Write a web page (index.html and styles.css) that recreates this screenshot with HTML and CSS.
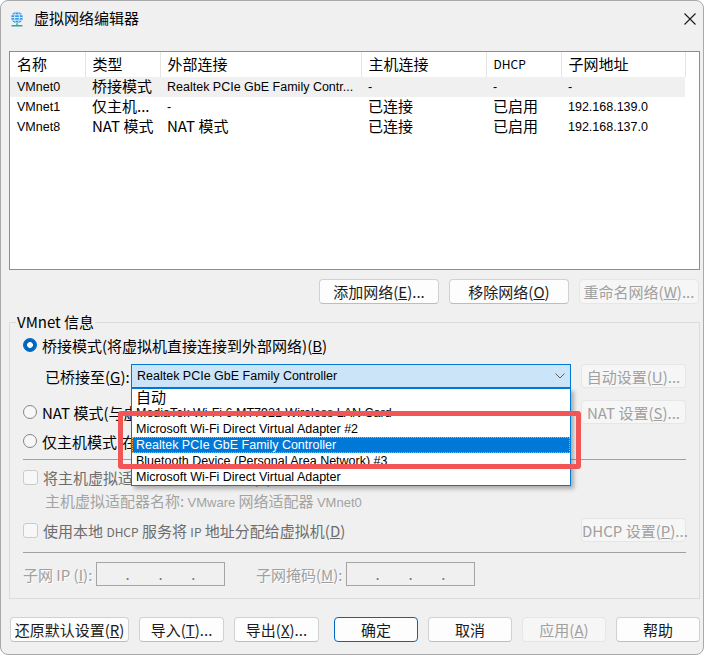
FILE: index.html
```html
<!DOCTYPE html>
<html lang="zh-CN">
<head>
    <meta charset="UTF-8">
    <meta name="viewport" content="width=device-width, initial-scale=1.0">
    <title>虚拟网络编辑器</title>
    <link rel="stylesheet" href="styles.css">
</head>
<body>
    <div class="window">
        <div class="titlebar">
            <svg class="app-icon" width="16" height="16" viewBox="0 0 16 16">
                <circle cx="8" cy="6.5" r="5.8" fill="#3a97e6"/>
                <ellipse cx="8" cy="6.5" rx="2.4" ry="5.8" fill="none" stroke="#d6ecfd" stroke-width="1"/>
                <path d="M2.2 6.5h11.6M3 3.8h10M3 9.2h10" stroke="#d6ecfd" stroke-width="1"/>
                <rect x="7.3" y="12.3" width="1.4" height="1.8" fill="#2aa79b"/>
                <rect x="2.5" y="14" width="11" height="1.6" rx=".6" fill="#2aa79b"/>
            </svg>
            <span class="title">虚拟网络编辑器</span>
            <svg class="close" width="14" height="14" viewBox="0 0 14 14">
                <path d="M1.5 1.5l11 11M12.5 1.5l-11 11" stroke="#1a1a1a" stroke-width="1.1"/>
            </svg>
        </div>

        <div class="content">
            <div class="netlist">
                <table>
                    <colgroup>
                        <col style="width:75px"><col style="width:75px"><col style="width:201px">
                        <col style="width:125px"><col style="width:75px"><col style="width:124px">
                    </colgroup>
                    <thead>
                        <tr><th>名称</th><th>类型</th><th>外部连接</th><th>主机连接</th><th class="small">DHCP</th><th>子网地址</th></tr>
                    </thead>
                    <tbody>
                        <tr class="hot"><td>VMnet0</td><td class="zh">桥接模式</td><td>Realtek PCIe GbE Family Contr...</td><td>-</td><td>-</td><td>-</td></tr>
                        <tr><td>VMnet1</td><td class="zh">仅主机...</td><td>-</td><td class="zh">已连接</td><td class="zh">已启用</td><td>192.168.139.0</td></tr>
                        <tr><td>VMnet8</td><td class="zh">NAT 模式</td><td class="zh">NAT 模式</td><td class="zh">已连接</td><td class="zh">已启用</td><td>192.168.137.0</td></tr>
                    </tbody>
                </table>
            </div>

            <div class="list-actions">
                <button class="btn">添加网络(<u>E</u>)...</button>
                <button class="btn">移除网络(<u>O</u>)</button>
                <button class="btn" disabled>重命名网络(<u>W</u>)...</button>
            </div>

            <fieldset class="group">
                <legend>VMnet 信息</legend>

                <div class="opt-row first">
                    <span class="radio on"></span>
                    <span>桥接模式(将虚拟机直接连接到外部网络)(<u>B</u>)</span>
                </div>

                <div class="bridge-row">
                    <span class="bridge-label">已桥接至(<u>G</u>):</span>
                    <div class="combo">
                        <span>Realtek PCIe GbE Family Controller</span>
                        <svg class="chevron" width="10" height="6" viewBox="0 0 10 6">
                            <path d="M.5 .5l4.5 4.5 4.5-4.5" fill="none" stroke="#5c5c5c" stroke-width="1"/>
                        </svg>
                        <ul class="dropdown">
                            <li class="big">自动</li>
                            <li>MediaTek Wi-Fi 6 MT7921 Wireless LAN Card</li>
                            <li>Microsoft Wi-Fi Direct Virtual Adapter #2</li>
                            <li class="selected">Realtek PCIe GbE Family Controller</li>
                            <li>Bluetooth Device (Personal Area Network) #3</li>
                            <li>Microsoft Wi-Fi Direct Virtual Adapter</li>
                        </ul>
                    </div>
                    <button class="btn side" disabled>自动设置(<u>U</u>)...</button>
                </div>

                <div class="opt-row tall nat">
                    <span class="radio"></span>
                    <span>NAT 模式(与虚拟机共享主机的 IP 地址)(<u>N</u>)</span>
                    <button class="btn side" disabled>NAT 设置(<u>S</u>)...</button>
                </div>

                <div class="opt-row host">
                    <span class="radio"></span>
                    <span>仅主机模式(在专用网络内连接虚拟机)(<u>H</u>)</span>
                </div>

                <hr class="sep first-sep">

                <div class="opt-row check-row dim">
                    <span class="checkbox"></span>
                    <span>将主机虚拟适配器连接到此网络(<u>V</u>)</span>
                </div>
                <div class="adapter-name">主机虚拟适配器名称: <span class="latin">VMware</span> 网络适配器 <span class="latin">VMnet0</span></div>

                <div class="opt-row tall dhcp dim">
                    <span class="checkbox"></span>
                    <span>使用本地 <span class="small">DHCP</span> 服务将 <span class="small">IP</span> 地址分配给虚拟机(<u>D</u>)</span>
                    <button class="btn side" disabled>DHCP 设置(<u>P</u>)...</button>
                </div>

                <hr class="sep second-sep">

                <div class="subnet-row">
                    <span class="etched ip-label">子网 IP (<u>I</u>):</span>
                    <span class="ip-box"><i>.</i><i>.</i><i>.</i></span>
                    <span class="etched mask-label">子网掩码(<u>M</u>):</span>
                    <span class="ip-box"><i>.</i><i>.</i><i>.</i></span>
                </div>
            </fieldset>
        </div>

        <div class="footer">
            <button class="btn restore">还原默认设置(<u>R</u>)</button>
            <button class="btn">导入(<u>T</u>)...</button>
            <button class="btn">导出(<u>X</u>)...</button>
            <button class="btn default ok">确定</button>
            <button class="btn">取消</button>
            <button class="btn" disabled>应用(<u>A</u>)</button>
            <button class="btn">帮助</button>
        </div>

        <!-- 标注框 -->
        <div class="callout"></div>
    </div>
</body>
</html>
```

FILE: styles.css
```css
body {
    margin: 0;
    background: #ffffff;
    font-family: "Noto Sans CJK SC", "Noto Sans", sans-serif;
    font-size: 15px;
    color: #000;
}

.window {
    position: relative;
    width: 704px;
    height: 655px;
    box-sizing: border-box;
    border: 1px solid #a9a9a9;
    border-radius: 8px;
    background: #f0f0f0;
    overflow: hidden;
}

/* 西文部分用较小的无衬线字 */
.latin,
td,
.combo {
    font-family: "Liberation Sans", "Noto Sans CJK SC", sans-serif;
    font-size: 12.5px;
}

/* 标题栏 */
.titlebar {
    display: flex;
    align-items: center;
    height: 35px;
    padding: 0 6px 0 8px;
}

.title {
    margin-left: 9px;
    line-height: 20px;
    margin-top: -2px;
}

.close {
    margin-left: auto;
}

.content {
    padding: 15px 3px 0 8px;
}

/* 网络列表 */
.netlist {
    height: 219px;
    box-sizing: border-box;
    border: 1px solid #8c8c92;
    background: #fff;
}

table {
    width: 675px;
    table-layout: fixed;
    border-collapse: collapse;
}

th {
    height: 23px;
    padding: 0 7px 2px;
    text-align: left;
    font-weight: normal;
    border-right: 1px solid #e5e5e5;
    white-space: nowrap;
}

th.small {
    font-size: 12px;
}

td {
    height: 20px;
    padding: 0 2px 0 7px;
    line-height: 20px;
    white-space: nowrap;
    overflow: hidden;
}

td.zh {
    height: 18px;
    padding-bottom: 2px;
    font-family: "Noto Sans CJK SC", sans-serif;
    font-size: 15px;
    line-height: 18px;
    overflow: visible;
}

tr.hot td {
    background: #f0f0f0;
}

.list-actions {
    display: flex;
    justify-content: flex-end;
    gap: 10px;
    margin: 9px 1px 0 0;
}

.list-actions .btn {
    width: 120px;
}

/* 按钮 */
.btn {
    height: 25px;
    box-sizing: border-box;
    padding: 0;
    border: 1px solid #d1d1d1;
    border-bottom-color: #bdbdbd;
    border-radius: 4px;
    background: #fdfdfd;
    font-family: inherit;
    font-size: 15px;
    color: #1b1b1b;
    white-space: nowrap;
}

.btn:disabled {
    background: #f6f6f6;
    border-color: #e6e6e6;
    color: #a0a0a0;
}

.btn.default {
    border-color: #0067c0;
}

.btn.side {
    width: 105px;
    height: 24px;
    margin-left: auto;
}

/* VMnet 信息 */
.group {
    margin: 8px 0 0;
    padding: 0 13px 12px;
    border: 1px solid #dcdcdc;
    min-width: 0;
}

legend {
    margin-left: -7px;
    padding: 0 1px;
    line-height: 20px;
}

.opt-row {
    display: flex;
    align-items: center;
    height: 20px;
    white-space: nowrap;
}

.opt-row.first {
    margin-top: 3px;
}

.opt-row.tall {
    height: 24px;
}

.opt-row.nat {
    margin-top: 12px;
}

.opt-row.host {
    margin-top: 7px;
}

.radio {
    flex: none;
    width: 14px;
    height: 14px;
    margin-right: 5px;
    box-sizing: border-box;
    border: 1px solid #858585;
    border-radius: 50%;
    background: #f7f7f7;
}

.radio.on {
    border-color: #0067c0;
    background: radial-gradient(circle, #fff 0 2.6px, #0067c0 3.2px);
}

.checkbox {
    flex: none;
    width: 15px;
    height: 15px;
    margin-right: 5px;
    box-sizing: border-box;
    border: 1px solid #cbcbcb;
    border-radius: 3px;
    background: #f7f7f7;
}

.dim {
    color: #6d6d6d;
}

.small {
    font-size: 12px;
}

.bridge-row {
    display: flex;
    align-items: center;
    height: 24px;
    margin-top: 9px;
}

.bridge-label {
    width: 108px;
    padding-left: 22px;
    box-sizing: border-box;
    white-space: nowrap;
}

.combo {
    position: relative;
    display: flex;
    align-items: center;
    width: 440px;
    height: 24px;
    box-sizing: border-box;
    padding-left: 5px;
    border: 1px solid #0078d7;
    background: #cce4f7;
}

.chevron {
    margin-left: auto;
    margin-right: 5px;
}

/* 下拉列表 */
.dropdown {
    position: absolute;
    top: calc(100% + 1px);
    left: -1px;
    z-index: 10;
    width: 440px;
    height: 98px;
    box-sizing: border-box;
    margin: 0;
    padding: 0;
    list-style: none;
    border: 1px solid #0078d7;
    background: #fff;
    box-shadow: 3px 3px 4px rgba(0, 0, 0, 0.28);
    overflow: hidden;
}

.dropdown li {
    height: 16px;
    padding-left: 4px;
    line-height: 16px;
    white-space: nowrap;
}

.dropdown li.big {
    font-family: "Noto Sans CJK SC", sans-serif;
    font-size: 15px;
}

.dropdown li.selected {
    background: #0078d7;
    color: #fff;
    outline: 1px dotted #f7a64a;
    outline-offset: -1px;
}

.sep {
    height: 0;
    margin: 0;
    border: none;
    border-top: 1px solid #a0a0a0;
}

.first-sep {
    margin-top: 8px;
}

.second-sep {
    margin-top: 10px;
}

.check-row {
    margin-top: 7px;
}

.adapter-name {
    height: 20px;
    margin-top: 4px;
    padding-left: 22px;
    line-height: 20px;
    color: #a3a3a3;
    white-space: nowrap;
}

.adapter-name .latin {
    font-size: 13px;
}

.opt-row.dhcp {
    margin-top: 7px;
}

.subnet-row {
    display: flex;
    align-items: center;
    height: 24px;
    margin-top: 9px;
}

.etched {
    color: #a0a0a0;
    text-shadow: 1px 1px 0 #fff;
    white-space: nowrap;
}

.ip-label {
    width: 73px;
}

.mask-label {
    width: 90px;
    margin-left: 31px;
}

.ip-box {
    display: flex;
    justify-content: space-evenly;
    align-items: center;
    width: 129px;
    height: 24px;
    box-sizing: border-box;
    border: 1px solid #a5a5a5;
    color: #7a7a7a;
}

.ip-box i {
    font-style: normal;
    line-height: 14px;
}

/* 底部按钮 */
.footer {
    display: flex;
    gap: 10px;
    padding: 18px 0 0 9px;
}

.footer .btn {
    width: 84px;
}

.footer .btn.restore {
    width: 119px;
}

.footer .btn:nth-child(2),
.footer .btn:nth-child(3) {
    width: 85px;
}

.footer .btn.ok {
    margin-left: 5px;
}

.callout {
    position: absolute;
    left: 117px;
    top: 410px;
    z-index: 20;
    width: 463px;
    height: 58px;
    box-sizing: border-box;
    border: 5px solid #f25555;
    border-radius: 3px;
    pointer-events: none;
}
```
